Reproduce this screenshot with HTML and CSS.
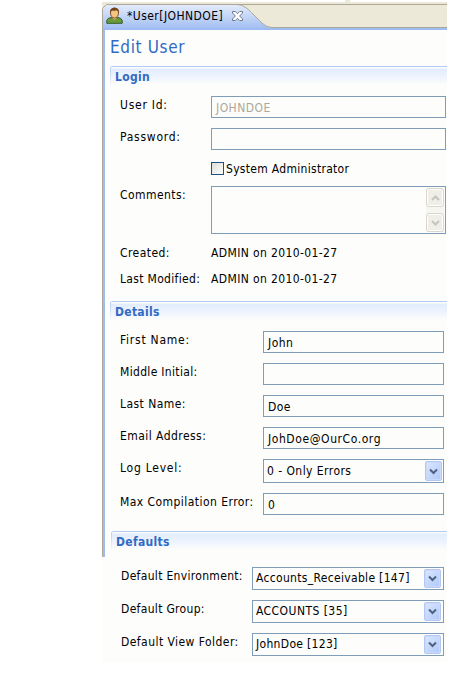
FILE: index.html
```html
<!DOCTYPE html>
<html lang="en">
<head>
<meta charset="utf-8">
<title>Edit User</title>
<link rel="stylesheet" href="styles.css">
</head>
<body>
<main class="editor">
  <header class="tabbar">
    <svg class="tab-shape" width="345" height="28" viewBox="0 0 345 28">
      <defs>
        <linearGradient id="tabfill" x1="0" y1="0" x2="0" y2="1">
          <stop offset="0" stop-color="#e4ecfb"/>
          <stop offset="1" stop-color="#9ebcf2"/>
        </linearGradient>
      </defs>
      <path d="M0 0H345V26H0Z" fill="#ece9d8"/>
      <path d="M0.5 28V6.5L4.5 2.5H134C142 2.5 147 8 151 12L160 21C165 25.5 169 25.5 173 25.5V28Z" fill="url(#tabfill)"/>
      <path d="M0.5 28V6.5L4.5 2.5H345M134 2.5C142 2.5 147 8 151 12L160 21C165 25.5 169 25.5 173 25.5H345" fill="none" stroke="#aca899"/>
      <path d="M1 26H345V28H1Z" fill="#9ebcf2"/>
    </svg>
    <div class="tab">
      <svg class="user-icon" width="17" height="18" viewBox="0 0 17 18">
        <path d="M.8 16.3V13.5Q1.5 11 5 10.5L8.5 12L12 10.5Q15.5 11 16.2 13.5V16.3Z" fill="#6a9a3c" stroke="#355d25"/>
        <path d="M6 9H11V11L8.5 13L6 11Z" fill="#e9b776"/>
        <ellipse cx="8.5" cy="6" rx="4" ry="5" fill="#f3c783" stroke="#81532a"/>
        <path d="M4 6Q3.5 .7 8.5 .7T13 6Q12 3.6 10.5 3.3Q8 4.2 6 3.5Q4.7 4.5 4 6Z" fill="#72451f"/>
      </svg>
      <span class="tab-title">*User[JOHNDOE]</span>
      <svg class="close" width="11" height="10" viewBox="0 0 11 10">
        <path d="M.5.5H3.3L5.5 2.7L7.7.5H10.5V2L7.6 5L10.5 8V9.5H7.7L5.5 7.3L3.3 9.5H.5V8L3.4 5L.5 2Z" fill="#fff" stroke="#707a8c"/>
      </svg>
    </div>
  </header>
  <h1>Edit User</h1>

  <section class="login">
    <h2>Login</h2>
    <div class="row r-id"><label class="wide">User Id:</label><div class="field disabled">JOHNDOE</div></div>
    <div class="row r-pw"><label class="wide">Password:</label><div class="field"></div></div>
    <div class="row r-admin"><i class="check"></i><span class="admin">System Administrator</span></div>
    <div class="row r-comments"><label>Comments:</label>
      <div class="area"><div class="scroll">
        <b><svg width="9" height="6" viewBox="0 0 9 6"><path d="M1 5L4.5 1.5L8 5" /></svg></b>
        <b><svg width="9" height="6" viewBox="0 0 9 6"><path d="M1 1L4.5 4.5L8 1" /></svg></b>
      </div></div>
    </div>
    <div class="row r-meta"><label>Created:</label><span class="meta">ADMIN on 2010-01-27</span></div>
    <div class="row r-meta"><label class="tight">Last Modified:</label><span class="meta">ADMIN on 2010-01-27</span></div>
  </section>

  <section class="details">
    <h2>Details</h2>
    <div class="row"><label class="wide">First Name:</label><div class="field">John</div></div>
    <div class="row"><label class="tight">Middle Initial:</label><div class="field"></div></div>
    <div class="row"><label>Last Name:</label><div class="field">Doe</div></div>
    <div class="row"><label>Email Address:</label><div class="field mail">JohDoe@OurCo.org</div></div>
    <div class="row r-log"><label class="wide">Log Level:</label><div class="select log"><span>0 - Only Errors</span><b><svg width="9" height="7" viewBox="0 0 9 7"><path d="M1 1.5L4.5 5L8 1.5" /></svg></b></div></div>
    <div class="row"><label>Max Compilation Error:</label><div class="field">0</div></div>
  </section>

  <section class="defaults">
    <h2>Defaults</h2>
    <div class="row"><label class="tight">Default Environment:</label><div class="select"><span class="tight">Accounts_Receivable [147]</span><b><svg width="9" height="7" viewBox="0 0 9 7"><path d="M1 1.5L4.5 5L8 1.5" /></svg></b></div></div>
    <div class="row"><label class="tight">Default Group:</label><div class="select"><span class="grp">ACCOUNTS [35]</span><b><svg width="9" height="7" viewBox="0 0 9 7"><path d="M1 1.5L4.5 5L8 1.5" /></svg></b></div></div>
    <div class="row"><label>Default View Folder:</label><div class="select"><span class="tight">JohnDoe [123]</span><b><svg width="9" height="7" viewBox="0 0 9 7"><path d="M1 1.5L4.5 5L8 1.5" /></svg></b></div></div>
  </section>
</main>
<i class="notch"></i>
</body>
</html>
```
FILE: styles.css
```css
* { box-sizing: border-box; }
body { margin: 0; background: #fff; height: 700px; overflow: hidden; }
.editor {
  margin: 2px 0 0 102px; width: 345px; height: 660px;
  background: linear-gradient(#aca899, #aca899) 0 0 / 1px 555px no-repeat,
    linear-gradient(#9ebcf2, #9ebcf2) 1px 0 / 2px 555px no-repeat, #fdfdfb;
  font: 12px/16px "DejaVu Sans Condensed", "DejaVu Sans", sans-serif;
  font-stretch: condensed; letter-spacing: .45px; color: #000; white-space: nowrap;
}
.notch { position: absolute; left: 345px; top: 0; width: 5px; height: 2px; background: #ece9d8; }
.tabbar { position: relative; height: 28px; }
.tab-shape { position: absolute; left: 0; top: 0; }
.tab { position: relative; display: flex; padding: 5px 0 0 4px; }
.tab-title { width: 100px; margin: 1px 0 0 4px; }
.close { margin: 4px 0 0 5px; }
h1 { margin: 7px 0 0 8px; height: 29px; font-size: 17px; line-height: 20px; font-weight: 400; letter-spacing: .65px; color: #316ac5; }
section { margin-left: 8px; }
h2 {
  margin: 0; height: 20px; padding: 2px 0 0 5px;
  border-top: 1px solid #b2cbf5; border-top-left-radius: 3px;
  font-size: 12px; line-height: 16px; letter-spacing: .3px; color: #316ac5;
  background: linear-gradient(#b2cbf5, #fdfdfb) 0 0 / 1px 20px no-repeat,
    linear-gradient(#fdfdfb 0 1px, #e3ecfd 2px, #eef4fe 10px, #fdfdfb 18px);
}
.row { display: flex; align-items: flex-start; margin-left: 10px; }
label { width: 91px; flex: none; }
.wide { letter-spacing: .75px; }
.tight { letter-spacing: .32px; }
.field, .area, .select { border: 1px solid #7f9db9; height: 22px; }
.field { width: 181px; padding: 3px 4px; }
.mail { letter-spacing: .58px; }
.login .field, .area { width: 235px; }
.disabled { color: #aca899; }
.login .row { height: 32px; }
.login { height: 235px; }
.login .r-id { margin-top: 10px; }
.login label, .meta { margin-top: 1px; }
.meta { letter-spacing: .38px; }
.login .r-admin { padding: 1px 0 0 91px; height: 26px; }
.check { width: 13px; height: 13px; margin-top: 1px; border: 1px solid #1c5180; background: linear-gradient(135deg, #dcdcd7, #fff); }
.admin { margin-left: 2px; letter-spacing: .3px; }
.login .r-comments { height: 58px; }
.area { height: 48px; padding: 1px; display: flex; justify-content: flex-end; }
.scroll { width: 18px; display: flex; flex-direction: column; justify-content: space-between; background: #f6f5f0; }
.scroll b { height: 19px; border: 1px solid #d8d7c8; border-radius: 3px; background: #efeee8; display: flex; align-items: center; justify-content: center; box-shadow: inset 0 0 0 1px #fff; }
.scroll path { fill: none; stroke: #c6c5bb; stroke-width: 2; }
.login .r-meta { height: 26px; }
.details { height: 230px; }
.details .row { height: 32px; }
.details h2 + .row { margin-top: 10px; }
.details label { width: 143px; margin-top: 1px; }
.details .r-log { height: 34px; }
.select { width: 192px; height: 23px; display: flex; justify-content: space-between; padding: 1px; }
.select span { margin: 1px 0 0 2px; }
.select b { width: 17px; height: 19px; border: 1px solid #b4c7f4; border-radius: 2px; background: linear-gradient(135deg, #dce7ff, #aec8f7); box-shadow: inset 0 0 0 1px #cbdafa; display: flex; align-items: center; justify-content: center; }
.select path { fill: none; stroke: #4d6185; stroke-width: 2; }
.select.log { width: 181px; height: 24px; }
.select.log span { margin-top: 2px; }
.log b { height: 20px; }
.defaults { margin-left: 9px; }
.defaults .row { height: 33px; }
.defaults h2 + .row { margin-top: 16px; }
.defaults label { width: 131px; margin-top: 1px; }
.defaults .select b { margin-right: 1px; }
```
